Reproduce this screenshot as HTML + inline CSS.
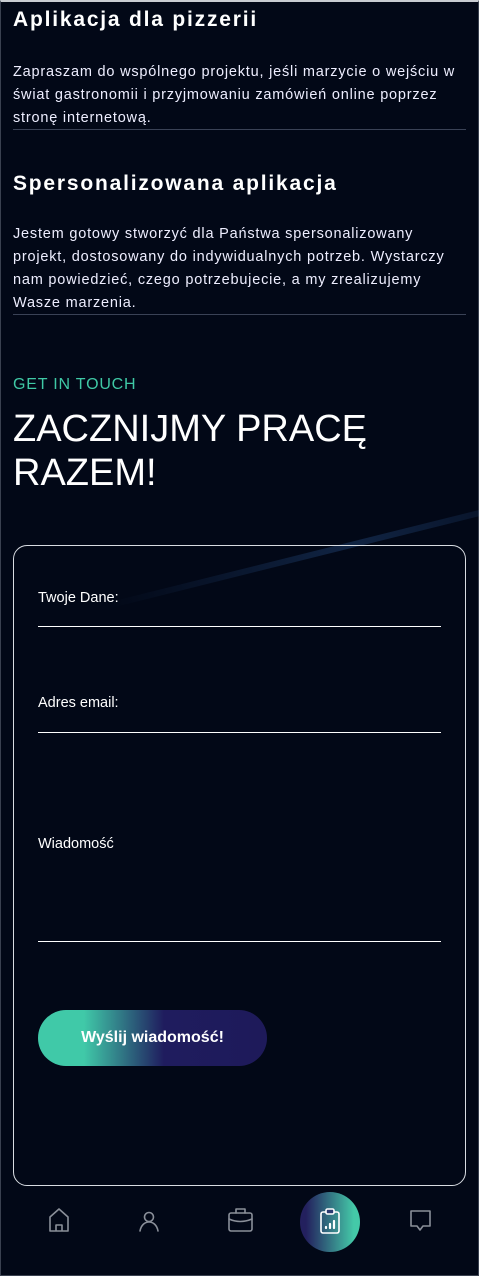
<!DOCTYPE html>
<html><head><meta charset="utf-8"><style>
*{margin:0;padding:0;box-sizing:border-box}
body{width:479px;height:1276px;background:#020817;color:#fff;font-family:"Liberation Sans",sans-serif;position:relative;overflow:hidden;border:1px solid #3a4150;border-top:2px solid #c8ccd2}
.a{position:absolute;white-space:nowrap}
h2{position:absolute;left:12px;font-size:21px;font-weight:bold;letter-spacing:1.8px}
.p{position:absolute;left:12px;font-size:14.5px;line-height:23px;white-space:nowrap;color:#eef;letter-spacing:.8px}
.hr{position:absolute;left:12px;width:453px;height:1px;background:#3a4256}
.lbl{position:absolute;left:37px;font-size:14.5px}
.ln{position:absolute;left:37px;width:403px;height:1px;background:#fff}
</style></head><body>
<div style="position:absolute;left:100px;top:540px;width:500px;height:6px;background:linear-gradient(90deg,transparent,rgba(60,120,200,.25),transparent);transform:rotate(-14deg)"></div>
<div style="position:absolute;left:380px;top:1120px;width:300px;height:5px;background:linear-gradient(90deg,transparent,rgba(40,110,210,.5));transform:rotate(-75deg)"></div>
<h2 style="top:6px">Aplikacja dla pizzerii</h2>
<div class="p" style="top:59px">Zapraszam do wspólnego projektu, jeśli marzycie o wejściu w<br>świat gastronomii i przyjmowaniu zamówień online poprzez<br>stronę internetową.</div>
<div class="hr" style="top:127px"></div>
<h2 style="top:170px">Spersonalizowana aplikacja</h2>
<div class="p" style="top:221px">Jestem gotowy stworzyć dla Państwa spersonalizowany<br>projekt, dostosowany do indywidualnych potrzeb. Wystarczy<br>nam powiedzieć, czego potrzebujecie, a my zrealizujemy<br>Wasze marzenia.</div>
<div class="hr" style="top:312px"></div>
<div class="a" style="left:12px;top:374px;font-size:16px;color:#3fc9a6;letter-spacing:.8px">GET IN TOUCH</div>
<div class="a" style="left:12px;top:405px;font-size:38px;line-height:44px;white-space:normal;width:420px">ZACZNIJMY PRACĘ<br>RAZEM!</div>
<div style="position:absolute;left:12px;top:543px;width:453px;height:641px;border:1px solid #d8dce2;border-radius:14px"></div>
<div class="lbl" style="top:588px">Twoje Dane:</div><div class="ln" style="top:624px"></div>
<div class="lbl" style="top:693px">Adres email:</div><div class="ln" style="top:730px"></div>
<div class="lbl" style="top:834px">Wiadomość</div><div class="ln" style="top:939px"></div>
<div style="position:absolute;left:37px;top:1008px;width:229px;height:56px;border-radius:28px;background:linear-gradient(90deg,#40c9a8 0%,#40c9a8 20%,#1f1c5e 55%,#1e1a5a 100%);font-weight:bold;font-size:16px;text-align:center;line-height:56px">Wyślij wiadomość!</div>
<svg style="position:absolute;left:-1px;top:1190px" width="479" height="60" fill="none" stroke="#8a8f99" stroke-width="1.6" stroke-linecap="round" stroke-linejoin="round">
<path d="M50 39V25l9-8 9 8v14zM56 39v-6h6v6"/>
<circle cx="149" cy="25" r="4.5"/><path d="M140 39c1-6 5-9 9-9s8 3 9 9"/>
<rect x="229" y="21" width="23" height="18" rx="2"/><path d="M236 21v-4h9v4M229 27q11 5 23 0"/>
<circle cx="330" cy="30" r="30" fill="url(#g)" stroke="none"/>
<path d="M411 19h19v15h-7l-3 4-3-4h-6z"/>
<defs><linearGradient id="g" x1="0" x2="1"><stop offset=".1" stop-color="#23205e"/><stop offset=".9" stop-color="#44c9a8"/></linearGradient></defs>
<g stroke="#fff"><rect x="321" y="20" width="18" height="21" rx="2"/><rect x="326" y="17" width="8" height="5" rx="1.5" fill="#2a3a70"/><path d="M326 36v-1M330 36v-4M334 36v-7" stroke-width="2.2"/></g>
</svg>
</body></html>
